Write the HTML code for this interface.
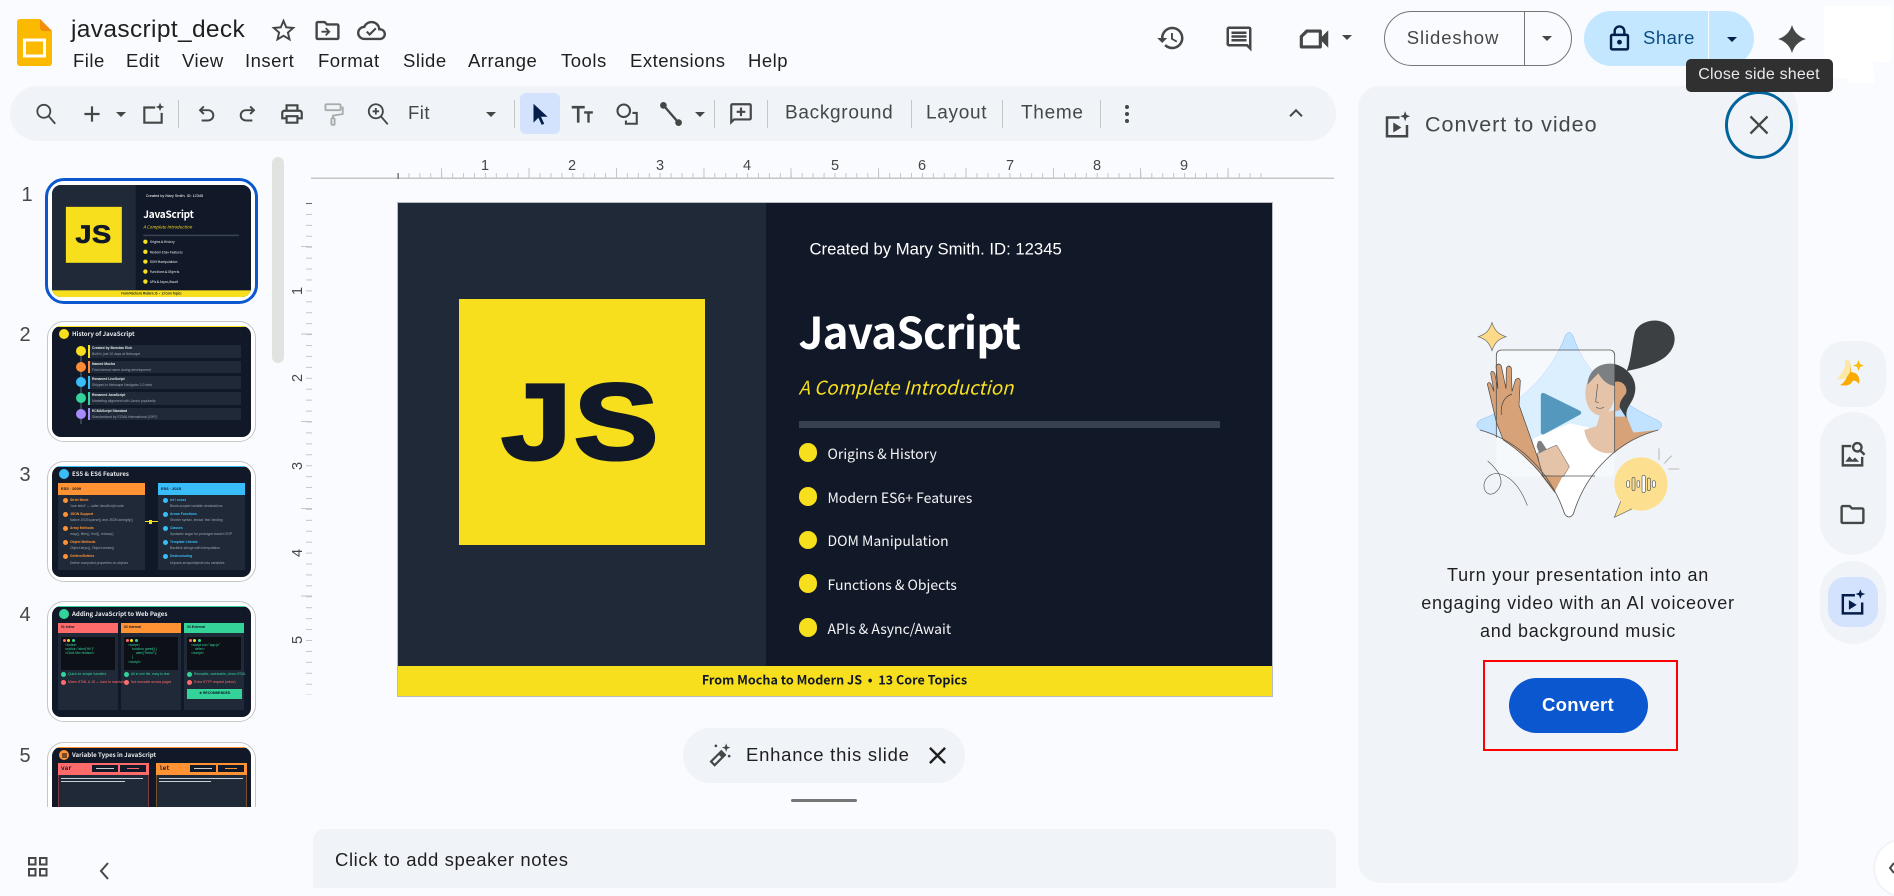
<!DOCTYPE html>
<html><head><meta charset="utf-8"><title>javascript_deck</title>
<style>
html,body{margin:0;padding:0;width:1894px;height:888px;overflow:hidden;background:#f9fbfe;font-family:"Liberation Sans",sans-serif;color:#1f1f1f}
*{box-sizing:border-box}
.a{position:absolute}
.t{position:absolute;white-space:nowrap;line-height:1;transform:translateY(-50%)}
.c{position:absolute;white-space:nowrap;line-height:1;transform:translate(-50%,-50%)}
.i{position:absolute;width:29px;height:29px;fill:#444746}
.s{width:26px;height:26px;top:101px}
.m{font-size:18.5px;letter-spacing:.5px;top:61px;color:#1f1f1f}
.caret{position:absolute;width:0;height:0;border-left:5px solid transparent;border-right:5px solid transparent;border-top:5px solid #444746}
.sep{position:absolute;top:100px;width:1px;height:28px;background:#c7c7c7}
.tb{font-size:19px;letter-spacing:.7px;top:113px;color:#444746}
.num{font-size:20px;color:#444746}
.rn{font-size:14.5px;color:#444746}
.ns{font-family:"Noto Sans CJK JP","Liberation Sans",sans-serif}
.js{font-family:"Liberation Sans",Arial,sans-serif;font-size:108px;font-weight:700;color:#111827;-webkit-text-stroke:3px #111827;letter-spacing:2px;transform:translate(-50%,-50%) scaleX(1.17)}
.h1{font-size:44px;font-weight:700;color:#fff;letter-spacing:-.85px}
.slide{position:absolute;width:874.5px;height:493px;background:#111827;overflow:hidden}
.thumbframe{position:absolute;left:47px;width:209px;height:121px;border:1.5px solid #c4c7c5;border-radius:17px;background:#fff}
.th{position:absolute;left:52px;width:199px;height:111px;background:#111827;border-radius:9px;overflow:hidden}
.th div,.th span{position:absolute}
.tt{position:absolute;color:#e8eaed;font-weight:700;font-size:6.1px;line-height:1;white-space:nowrap;left:20px;top:5px;font-family:"Noto Sans CJK JP",sans-serif}
.x{font-size:3.4px;line-height:1;white-space:nowrap;font-family:"Liberation Sans",sans-serif}
</style></head><body>

<!-- logo -->
<svg class="a" style="left:17px;top:19px" width="35" height="47" viewBox="0 0 35 47">
<path d="M3 0H23L35 12V44a3 3 0 0 1-3 3H3a3 3 0 0 1-3-3V3a3 3 0 0 1 3-3z" fill="#fbb900"/>
<path d="M23 0L35 12H26a3 3 0 0 1-3-3z" fill="#f28e0b"/>
<rect x="7.5" y="21" width="20" height="16" fill="none" stroke="#fff" stroke-width="3"/></svg>

<div class="t" style="left:71px;top:30px;font-size:24.5px;letter-spacing:.35px;color:#1f1f1f">javascript_deck</div>
<svg class="i" style="left:269px;top:16px" viewBox="0 0 24 24"><path d="M22 9.24l-7.19-.62L12 2 9.19 8.63 2 9.24l5.46 4.73L5.82 21 12 17.27 18.18 21l-1.63-7.03L22 9.24zM12 15.4l-3.76 2.27 1-4.28-3.32-2.88 4.38-.38L12 6.1l1.71 4.04 4.38.38-3.32 2.88 1 4.28L12 15.4z"/></svg>
<svg class="i" style="left:313px;top:16px" viewBox="0 0 24 24"><path d="M20 6h-8l-2-2H4c-1.1 0-2 .9-2 2v12c0 1.1.9 2 2 2h16c1.1 0 2-.9 2-2V8c0-1.1-.9-2-2-2zm0 12H4V6h5.17l2 2H20v10z"/><path d="M11 9.5l3.5 3.5-3.5 3.5-1-1 1.7-1.7H7v-1.6h4.7L10 10.5z"/></svg>
<svg class="i" style="left:357px;top:16px" viewBox="0 0 24 24"><path d="M19.35 10.04A7.49 7.49 0 0 0 12 4C9.11 4 6.6 5.64 5.35 8.04A5.994 5.994 0 0 0 0 14c0 3.31 2.69 6 6 6h13c2.76 0 5-2.24 5-5 0-2.64-2.05-4.78-4.65-4.96zM19 18H6c-2.21 0-4-1.79-4-4s1.79-4 4-4h.71C7.37 7.69 9.48 6 12 6c3.04 0 5.5 2.46 5.5 5.5v.5H19c1.66 0 3 1.34 3 3s-1.34 3-3 3z"/><path d="M10.5 16.5l-3-3 1.2-1.2 1.8 1.8 4.5-4.5 1.2 1.2z"/></svg>

<div class="t m" style="left:73px">File</div>
<div class="t m" style="left:126px">Edit</div>
<div class="t m" style="left:182px">View</div>
<div class="t m" style="left:245px">Insert</div>
<div class="t m" style="left:318px">Format</div>
<div class="t m" style="left:403px">Slide</div>
<div class="t m" style="left:468px">Arrange</div>
<div class="t m" style="left:561px">Tools</div>
<div class="t m" style="left:630px">Extensions</div>
<div class="t m" style="left:748px">Help</div>

<!-- top right -->
<svg class="i" style="left:1156px;top:23px;width:30px;height:30px" viewBox="0 0 24 24"><path d="M13 3c-4.97 0-9 4.03-9 9H1l3.89 3.89.07.14L9 12H6c0-3.87 3.13-7 7-7s7 3.13 7 7-3.13 7-7 7c-1.93 0-3.68-.79-4.94-2.06l-1.42 1.42C8.27 19.99 10.51 21 13 21c4.97 0 9-4.03 9-9s-4.03-9-9-9zm-1 5v5l4.28 2.54.72-1.21-3.5-2.08V8H12z"/></svg>
<svg class="i" style="left:1224px;top:24px;width:30px;height:30px" viewBox="0 0 24 24"><path d="M21.99 4c0-1.1-.89-2-1.99-2H4c-1.1 0-2 .9-2 2v12c0 1.1.9 2 2 2h14l4 4-.01-18zM20 4v13.17L18.83 16H4V4h16zM6 12h12v2H6zm0-3h12v2H6zm0-3h12v2H6z"/></svg>
<svg class="i" style="left:1295px;top:20px;width:38px;height:38px" viewBox="0 0 24 24"><path d="M17 10.5V7c0-.55-.45-1-1-1H7L3 10v7c0 .55.45 1 1 1h12c.55 0 1-.45 1-1v-3.5l4 4v-11l-4 4zM15 16H5v-5.2L8 8h7v8z"/></svg>
<div class="caret" style="left:1342px;top:35px"></div>

<div class="a" style="left:1384px;top:11px;width:188px;height:55px;border:1px solid #747775;border-radius:28px"></div>
<div class="a" style="left:1524px;top:11px;width:1px;height:55px;background:#747775"></div>
<div class="c" style="left:1453px;top:38px;font-size:18.5px;letter-spacing:.9px;color:#444746">Slideshow</div>
<div class="caret" style="left:1542px;top:36px"></div>

<div class="a" style="left:1584px;top:11px;width:170px;height:55px;background:#c2e7ff;border-radius:28px"></div>
<div class="a" style="left:1708px;top:11px;width:1px;height:55px;background:#f9fbfe"></div>
<svg class="i" style="left:1605px;top:24px;fill:#041e49" viewBox="0 0 24 24"><path d="M18 8h-1V6c0-2.76-2.24-5-5-5S7 3.24 7 6v2H6c-1.1 0-2 .9-2 2v10c0 1.1.9 2 2 2h12c1.1 0 2-.9 2-2V10c0-1.1-.9-2-2-2zM9 6c0-1.66 1.34-3 3-3s3 1.34 3 3v2H9V6zm9 14H6V10h12v10zm-6-3c1.1 0 2-.9 2-2s-.9-2-2-2-2 .9-2 2 .9 2 2 2z"/></svg>
<div class="t" style="left:1643px;top:38px;font-size:18.5px;letter-spacing:.5px;color:#0b4d80">Share</div>
<div class="caret" style="left:1727px;top:37px;border-top-color:#041e49"></div>

<svg class="a" style="left:1778px;top:25px" width="28" height="28" viewBox="0 0 28 28"><path d="M14 0C16 7 21 12 28 14C21 16 16 21 14 28C12 21 7 16 0 14C7 12 12 7 14 0Z" fill="#444746"/></svg>

<div class="a" style="left:1824px;top:6px;width:67px;height:56px;background:#fff"></div>
<div class="a" style="left:1824px;top:60px;width:49px;height:18px;background:#fff"></div>
<div class="a" style="left:1848px;top:70px;width:26px;height:13px;background:#fff"></div>

<!-- toolbar -->
<div class="a" style="left:10px;top:86px;width:1326px;height:55px;background:#f0f4f9;border-radius:28px"></div>
<div class="a" style="left:520px;top:93px;width:40px;height:41px;background:#d3e3fd;border-radius:6px"></div>
<div class="sep" style="left:178px"></div><div class="sep" style="left:514px"></div><div class="sep" style="left:714px"></div><div class="sep" style="left:767px"></div><div class="sep" style="left:911px"></div><div class="sep" style="left:1002px"></div><div class="sep" style="left:1100px"></div>

<svg class="i s" style="left:33px;fill:none;stroke:#444746;stroke-width:1.7" viewBox="0 0 24 24"><circle cx="10" cy="9.5" r="6"/><path d="M14.5 14l6 7"/></svg>
<svg class="i s" style="left:79px" viewBox="0 0 24 24"><path d="M19 13h-6v6h-2v-6H5v-2h6V5h2v6h6v2z"/></svg>
<div class="caret" style="left:116px;top:112px"></div>
<svg class="i s" style="left:140px" viewBox="0 0 24 24"><path d="M3 5h11v2H5v12h14v-8h2v10H3z"/><path d="M18.5 1.5l1.1 2.900 2.900 1.100-2.900 1.100-1.100 2.900-1.100-2.900-2.900-1.100 2.900-1.100z"/></svg>
<svg class="i s" style="left:193px;fill:none;stroke:#444746;stroke-width:1.8" viewBox="0 0 24 24"><path d="M10 5L6.500 8.500 10 12M6.500 8.500H14a4.700 4.700 0 0 1 0 9.500H8"/></svg>
<svg class="i s" style="left:235px;fill:none;stroke:#444746;stroke-width:1.8" viewBox="0 0 24 24"><path d="M14 5l3.500 3.500L14 12M17.500 8.500H10a4.700 4.700 0 0 0 0 9.500h6"/></svg>
<svg class="i s" style="left:279px" viewBox="0 0 24 24"><path d="M19 8h-1V3H6v5H5c-1.66 0-3 1.34-3 3v6h4v4h12v-4h4v-6c0-1.66-1.34-3-3-3zM8 5h8v3H8V5zm8 12v2H8v-4h8v2zm2-2v-2H6v2H4v-4c0-.55.45-1 1-1h14c.55 0 1 .45 1 1v4h-2z"/></svg>
<svg class="i s" style="left:320px;fill:none;stroke:#a8abaa;stroke-width:1.7" viewBox="0 0 24 24"><rect x="5" y="3" width="14" height="5.500" rx="1"/><path d="M19 6h2v6l-9 1.500V16"/><rect x="10.500" y="16" width="3" height="6" rx="1"/></svg>
<svg class="i s" style="left:365px;fill:none;stroke:#444746;stroke-width:1.7" viewBox="0 0 24 24"><circle cx="10" cy="9.500" r="6.500"/><path d="M15 14.500l6 7M10 6.500v6M7 9.500h6"/></svg>
<div class="t" style="left:408px;top:113px;font-size:18.5px;letter-spacing:.5px;color:#444746">Fit</div>
<div class="caret" style="left:486px;top:112px"></div>
<svg class="i s" style="left:527px;fill:#041e49" viewBox="0 0 24 24"><path d="M6 2.500V20l4.500-4.500L13.600 22l2.300-1-3-6.500H19z"/></svg>
<svg class="i s" style="left:569px" viewBox="0 0 24 24"><path d="M2.500 4.500h12v2.400h-4.800V20H7.300V6.900H2.500zM14 9.500h8v2.100h-2.900V20h-2.200v-8.400H14z"/></svg>
<svg class="i s" style="left:614px;fill:none;stroke:#444746;stroke-width:1.9" viewBox="0 0 24 24"><circle cx="9" cy="9" r="5.800"/><path d="M17 11h4v10H11v-3"/></svg>
<svg class="i s" style="left:658px;fill:none;stroke:#444746;stroke-width:2.2" viewBox="0 0 24 24"><path d="M5.500 4.500L18.500 19.500"/><circle cx="5" cy="4" r="2" fill="#444746"/><circle cx="19" cy="20" r="2" fill="#444746"/></svg>
<div class="caret" style="left:695px;top:112px"></div>
<svg class="i s" style="left:728px" viewBox="0 0 24 24"><path d="M4 2h16c1.100 0 2 .9 2 2v12c0 1.100-.9 2-2 2H6l-4 4V4c0-1.100.9-2 2-2zm0 2v13.170L5.170 16H20V4H4z"/><path d="M11 6h2v3h3v2h-3v3h-2v-3H8V9h3z"/></svg>
<div class="t tb" style="left:785px">Background</div>
<div class="t tb" style="left:926px">Layout</div>
<div class="t tb" style="left:1021px">Theme</div>
<div class="a" style="left:1125px;top:105px;width:4px;height:4px;border-radius:50%;background:#444746"></div>
<div class="a" style="left:1125px;top:112px;width:4px;height:4px;border-radius:50%;background:#444746"></div>
<div class="a" style="left:1125px;top:119px;width:4px;height:4px;border-radius:50%;background:#444746"></div>
<svg class="i s" style="left:1283px;top:100px;fill:none;stroke:#444746;stroke-width:1.8" viewBox="0 0 24 24"><path d="M6.500 15L12 9.500 17.500 15"/></svg>

<!-- rulers -->
<svg class="a" style="left:296px;top:155px" width="1050" height="550">
<defs>
<pattern id="ht" patternUnits="userSpaceOnUse" x="101.5" y="0" width="10.925" height="30"><rect x="0" y="18" width="1" height="6" fill="#c4c7c5"/></pattern>
<pattern id="vt" patternUnits="userSpaceOnUse" x="0" y="48" width="30" height="10.925"><rect x="10" y="0" width="6" height="1" fill="#c4c7c5"/></pattern>
</defs>
<rect x="101.5" y="0" width="874" height="24" fill="url(#ht)"/>
<rect x="15" y="22.5" width="1023" height="1.5" fill="#c4c7c5"/>
<rect x="101.5" y="18" width="1.3" height="6" fill="#666"/>
<rect x="145" y="13" width="1" height="11" fill="#c4c7c5"/><rect x="232.5" y="13" width="1" height="11" fill="#c4c7c5"/><rect x="320" y="13" width="1" height="11" fill="#c4c7c5"/><rect x="407.5" y="13" width="1" height="11" fill="#c4c7c5"/><rect x="494.5" y="13" width="1" height="11" fill="#c4c7c5"/><rect x="582" y="13" width="1" height="11" fill="#c4c7c5"/><rect x="669.5" y="13" width="1" height="11" fill="#c4c7c5"/><rect x="757" y="13" width="1" height="11" fill="#c4c7c5"/><rect x="844" y="13" width="1" height="11" fill="#c4c7c5"/><rect x="931.5" y="13" width="1" height="11" fill="#c4c7c5"/>
<rect x="0" y="48" width="30" height="492" fill="url(#vt)"/>
<rect x="10" y="48" width="6" height="1" fill="#666"/>
<rect x="5" y="91" width="11" height="1" fill="#c4c7c5"/><rect x="5" y="178.5" width="11" height="1" fill="#c4c7c5"/><rect x="5" y="266" width="11" height="1" fill="#c4c7c5"/><rect x="5" y="353" width="11" height="1" fill="#c4c7c5"/><rect x="5" y="440.5" width="11" height="1" fill="#c4c7c5"/>
</svg>
<div class="c rn" style="left:485px;top:166px">1</div><div class="c rn" style="left:572px;top:166px">2</div><div class="c rn" style="left:660px;top:166px">3</div><div class="c rn" style="left:747px;top:166px">4</div><div class="c rn" style="left:835px;top:166px">5</div><div class="c rn" style="left:922px;top:166px">6</div><div class="c rn" style="left:1010px;top:166px">7</div><div class="c rn" style="left:1097px;top:166px">8</div><div class="c rn" style="left:1184px;top:166px">9</div>
<div class="c rn" style="left:298px;top:291px;transform:translate(-50%,-50%) rotate(-90deg)">1</div><div class="c rn" style="left:298px;top:378px;transform:translate(-50%,-50%) rotate(-90deg)">2</div><div class="c rn" style="left:298px;top:466px;transform:translate(-50%,-50%) rotate(-90deg)">3</div><div class="c rn" style="left:298px;top:553px;transform:translate(-50%,-50%) rotate(-90deg)">4</div><div class="c rn" style="left:298px;top:640px;transform:translate(-50%,-50%) rotate(-90deg)">5</div>

<!-- scrollbar -->
<div class="a" style="left:272px;top:157px;width:12px;height:206px;border-radius:6px;background:#e1e3e1"></div>

<!-- main slide -->
<div class="slide" style="left:397.5px;top:203px;outline:1px solid #b8bcc0;outline-offset:0">
 <div class="a" style="left:0;top:0;width:368px;height:493px;background:#1f2937"></div>
 <div class="a" style="left:61px;top:96px;width:246px;height:246px;background:#f7df1e"></div>
 <div class="c js" style="left:183px;top:219px">JS</div>
 <div class="t" style="left:412px;top:47px;font-size:16.7px;color:#fff">Created by Mary Smith. ID: 12345</div>
 <div class="t ns h1" style="left:401px;top:127px">JavaScript</div>
 <div class="t ns" style="left:401px;top:185px;font-size:18.8px;font-style:italic;color:#f7df1e">A Complete Introduction</div>
 <div class="a" style="left:401px;top:218px;width:421px;height:7px;background:#374151"></div>
 <div class="a" style="left:401px;top:240px;width:18.5px;height:18.5px;border-radius:50%;background:#f7df1e"></div>
 <div class="a" style="left:401px;top:284px;width:18.5px;height:18.5px;border-radius:50%;background:#f7df1e"></div>
 <div class="a" style="left:401px;top:327.5px;width:18.5px;height:18.5px;border-radius:50%;background:#f7df1e"></div>
 <div class="a" style="left:401px;top:371px;width:18.5px;height:18.5px;border-radius:50%;background:#f7df1e"></div>
 <div class="a" style="left:401px;top:415px;width:18.5px;height:18.5px;border-radius:50%;background:#f7df1e"></div>
 <div class="t ns" style="left:430px;top:251px;font-size:14px;color:#f3f4f6">Origins &amp; History</div>
 <div class="t ns" style="left:430px;top:295px;font-size:14px;color:#f3f4f6">Modern ES6+ Features</div>
 <div class="t ns" style="left:430px;top:338px;font-size:14px;color:#f3f4f6">DOM Manipulation</div>
 <div class="t ns" style="left:430px;top:382px;font-size:14px;color:#f3f4f6">Functions &amp; Objects</div>
 <div class="t ns" style="left:430px;top:426px;font-size:14px;color:#f3f4f6">APIs &amp; Async/Await</div>
 <div class="a" style="left:0;top:463px;width:875px;height:30px;background:#f7df1e"></div>
 <div class="c ns" style="left:437px;top:477px;font-size:12.6px;font-weight:700;color:#111827">From Mocha to Modern JS &nbsp;•&nbsp; 13 Core Topics</div>
</div>

<!-- enhance pill -->
<div class="a" style="left:683px;top:728px;width:282px;height:55px;border-radius:28px;background:#f0f4f9"></div>
<svg class="i" style="left:705px;top:741px" viewBox="0 0 24 24"><path d="M13.500 8.500l3 3L8 20l-3-3z" fill="none" stroke="#444746" stroke-width="1.800"/><path d="M11 11l3 3 2.500-2.500-3-3z"/><path d="M17.500 2l.9 2.600L21 5.500l-2.600.9-.9 2.600-.9-2.600L14 5.500l2.600-.9z"/><circle cx="9" cy="4" r="1.100"/><circle cx="20" cy="12.500" r="1.100"/></svg>
<div class="t" style="left:746px;top:755px;font-size:18.5px;letter-spacing:.75px;color:#1f1f1f">Enhance this slide</div>
<svg class="i" style="left:923px;top:741px;fill:#1f1f1f" viewBox="0 0 24 24"><path d="M19 6.410L17.590 5 12 10.590 6.410 5 5 6.410 10.590 12 5 17.590 6.410 19 12 13.410 17.590 19 19 17.590 13.410 12z"/></svg>
<div class="a" style="left:791px;top:798.5px;width:66px;height:3px;border-radius:2px;background:#747775"></div>

<!-- notes -->
<div class="a" style="left:313px;top:829px;width:1023px;height:59px;background:#f0f4f9;border-radius:12px 12px 0 0"></div>
<div class="t" style="left:335px;top:860px;font-size:18.5px;letter-spacing:.6px;color:#1f1f1f">Click to add speaker notes</div>

<!-- bottom-left -->
<svg class="a" style="left:28px;top:857px" width="20" height="20" viewBox="0 0 20 20"><g fill="none" stroke="#444746" stroke-width="2"><rect x="1" y="1" width="6.500" height="6.500"/><rect x="12" y="1" width="6.500" height="6.500"/><rect x="1" y="12" width="6.500" height="6.500"/><rect x="12" y="12" width="6.500" height="6.500"/></g></svg>
<svg class="a" style="left:98px;top:861px" width="12" height="20" viewBox="0 0 12 20"><path d="M10 2L3 10l7 8" fill="none" stroke="#444746" stroke-width="2"/></svg>

<!-- thumbnails area -->
<div class="c num" style="left:27px;top:195px">1</div>
<div class="c num" style="left:25px;top:335px">2</div>
<div class="c num" style="left:25px;top:475px">3</div>
<div class="c num" style="left:25px;top:615px">4</div>
<div class="c num" style="left:25px;top:756px">5</div>

<div class="a" style="left:0;top:170px;width:270px;height:637px;overflow:hidden">
 <!-- slide 1 -->
 <div class="a" style="left:45px;top:8px;width:213px;height:126px;border:3.5px solid #0b57d0;border-radius:19px;background:#fff"></div>
 <div class="a" style="left:52px;top:15px;width:199px;height:112px;border-radius:9px;overflow:hidden;background:#111827">
  <div class="slide" style="left:0;top:0;transform:scale(.2275);transform-origin:0 0">
   <div class="a" style="left:0;top:0;width:368px;height:493px;background:#1f2937"></div>
   <div class="a" style="left:61px;top:96px;width:246px;height:246px;background:#f7df1e"></div>
   <div class="c js" style="left:183px;top:219px">JS</div>
   <div class="t" style="left:412px;top:47px;font-size:16.7px;color:#fff">Created by Mary Smith. ID: 12345</div>
   <div class="t ns h1" style="left:401px;top:127px">JavaScript</div>
   <div class="t ns" style="left:401px;top:185px;font-size:18.8px;font-style:italic;color:#f7df1e">A Complete Introduction</div>
   <div class="a" style="left:401px;top:218px;width:421px;height:7px;background:#374151"></div>
   <div class="a" style="left:401px;top:240px;width:18.5px;height:18.5px;border-radius:50%;background:#f7df1e"></div>
   <div class="a" style="left:401px;top:284px;width:18.5px;height:18.5px;border-radius:50%;background:#f7df1e"></div>
   <div class="a" style="left:401px;top:327.5px;width:18.5px;height:18.5px;border-radius:50%;background:#f7df1e"></div>
   <div class="a" style="left:401px;top:371px;width:18.5px;height:18.5px;border-radius:50%;background:#f7df1e"></div>
   <div class="a" style="left:401px;top:415px;width:18.5px;height:18.5px;border-radius:50%;background:#f7df1e"></div>
   <div class="t ns" style="left:430px;top:251px;font-size:14px;color:#f3f4f6">Origins &amp; History</div>
   <div class="t ns" style="left:430px;top:295px;font-size:14px;color:#f3f4f6">Modern ES6+ Features</div>
   <div class="t ns" style="left:430px;top:338px;font-size:14px;color:#f3f4f6">DOM Manipulation</div>
   <div class="t ns" style="left:430px;top:382px;font-size:14px;color:#f3f4f6">Functions &amp; Objects</div>
   <div class="t ns" style="left:430px;top:426px;font-size:14px;color:#f3f4f6">APIs &amp; Async/Await</div>
   <div class="a" style="left:0;top:463px;width:875px;height:30px;background:#f7df1e"></div>
   <div class="c ns" style="left:437px;top:477px;font-size:12.6px;font-weight:700;color:#111827">From Mocha to Modern JS &nbsp;•&nbsp; 13 Core Topics</div>
  </div>
 </div>

 <!-- slide 2 -->
 <div class="thumbframe" style="top:151px"></div>
 <div class="th" style="top:156px">
  <div style="left:0;top:0;width:199px;height:1px;background:#f7df1e"></div>
  <div style="left:7px;top:3px;width:10px;height:10px;border-radius:50%;background:#f7df1e"></div>
  <span class="tt">History of JavaScript</span>
  <div style="left:27.5px;top:20px;width:2px;height:78px;background:#374151"></div>
  <div style="left:36px;top:19px;width:153px;height:13px;background:#1f2937;border-left:2px solid #f7df1e"></div>
  <div style="left:36px;top:35px;width:153px;height:12px;background:#1f2937;border-left:2px solid #ff8c35"></div>
  <div style="left:36px;top:50px;width:153px;height:13px;background:#1f2937;border-left:2px solid #38bdf8"></div>
  <div style="left:36px;top:66px;width:153px;height:13px;background:#1f2937;border-left:2px solid #34d399"></div>
  <div style="left:36px;top:82px;width:153px;height:12px;background:#1f2937;border-left:2px solid #a78bfa"></div>
  <div style="left:23.5px;top:20px;width:10px;height:10px;border-radius:50%;background:#f7df1e"></div>
  <div style="left:23.5px;top:36px;width:10px;height:10px;border-radius:50%;background:#ff8c35"></div>
  <div style="left:23.5px;top:51px;width:10px;height:10px;border-radius:50%;background:#38bdf8"></div>
  <div style="left:23.5px;top:67px;width:10px;height:10px;border-radius:50%;background:#34d399"></div>
  <div style="left:23.5px;top:83px;width:10px;height:10px;border-radius:50%;background:#a78bfa"></div>
  <span class="x" style="left:40px;top:21px;color:#e5e7eb;font-weight:700">Created by Brendan Eich</span><span class="x" style="left:40px;top:27px;color:#9ca3af">Built in just 10 days at Netscape</span>
  <span class="x" style="left:40px;top:37px;color:#e5e7eb;font-weight:700">Named Mocha</span><span class="x" style="left:40px;top:43px;color:#9ca3af">First internal name during development</span>
  <span class="x" style="left:40px;top:52px;color:#e5e7eb;font-weight:700">Renamed LiveScript</span><span class="x" style="left:40px;top:58px;color:#9ca3af">Shipped in Netscape Navigator 2.0 beta</span>
  <span class="x" style="left:40px;top:68px;color:#e5e7eb;font-weight:700">Renamed JavaScript</span><span class="x" style="left:40px;top:74px;color:#9ca3af">Marketing alignment with Java's popularity</span>
  <span class="x" style="left:40px;top:84px;color:#e5e7eb;font-weight:700">ECMAScript Standard</span><span class="x" style="left:40px;top:90px;color:#9ca3af">Standardized by ECMA International (1997)</span>
 </div>

 <!-- slide 3 -->
 <div class="thumbframe" style="top:291px"></div>
 <div class="th" style="top:296px">
  <div style="left:0;top:0;width:199px;height:1px;background:#38bdf8"></div>
  <div style="left:7px;top:3px;width:10px;height:10px;border-radius:50%;background:#38bdf8"></div>
  <span class="tt">ES5 &amp; ES6 Features</span>
  <div style="left:6px;top:17px;width:87px;height:87px;background:#1f2937"></div>
  <div style="left:106px;top:17px;width:87px;height:87px;background:#1f2937"></div>
  <div style="left:6px;top:17px;width:87px;height:12px;background:#ff9233"></div>
  <div style="left:106px;top:17px;width:87px;height:12px;background:#38bdf8"></div>
  <span class="x" style="left:9px;top:21px;color:#111827;font-weight:700;font-size:4px">ES5 · 2009</span>
  <span class="x" style="left:109px;top:21px;color:#111827;font-weight:700;font-size:4px">ES6 · 2015</span>
  <div style="left:93px;top:55px;width:13px;height:1px;background:#f7df1e"></div><div style="left:97px;top:53.5px;width:3px;height:4px;background:#f7df1e"></div>
  <div style="left:11px;top:32px;width:5px;height:5px;border-radius:50%;background:#ff9233"></div><div style="left:11px;top:46px;width:5px;height:5px;border-radius:50%;background:#ff9233"></div><div style="left:11px;top:60px;width:5px;height:5px;border-radius:50%;background:#ff9233"></div><div style="left:11px;top:74px;width:5px;height:5px;border-radius:50%;background:#ff9233"></div><div style="left:11px;top:88px;width:5px;height:5px;border-radius:50%;background:#ff9233"></div>
  <div style="left:111px;top:32px;width:5px;height:5px;border-radius:50%;background:#38bdf8"></div><div style="left:111px;top:46px;width:5px;height:5px;border-radius:50%;background:#38bdf8"></div><div style="left:111px;top:60px;width:5px;height:5px;border-radius:50%;background:#38bdf8"></div><div style="left:111px;top:74px;width:5px;height:5px;border-radius:50%;background:#38bdf8"></div><div style="left:111px;top:88px;width:5px;height:5px;border-radius:50%;background:#38bdf8"></div>
  <span class="x" style="left:18px;top:33px;color:#ff9233;font-weight:700">Strict Mode</span><span class="x" style="left:18px;top:39px;color:#9ca3af">"use strict" — safer JavaScript code</span>
  <span class="x" style="left:18px;top:47px;color:#ff9233;font-weight:700">JSON Support</span><span class="x" style="left:18px;top:53px;color:#9ca3af">Native JSON.parse() and JSON.stringify()</span>
  <span class="x" style="left:18px;top:61px;color:#ff9233;font-weight:700">Array Methods</span><span class="x" style="left:18px;top:67px;color:#9ca3af">map(), filter(), find(), reduce()</span>
  <span class="x" style="left:18px;top:75px;color:#ff9233;font-weight:700">Object Methods</span><span class="x" style="left:18px;top:81px;color:#9ca3af">Object.keys(), Object.create()</span>
  <span class="x" style="left:18px;top:89px;color:#ff9233;font-weight:700">Getters/Setters</span><span class="x" style="left:18px;top:96px;color:#9ca3af">Define computed properties on objects</span>
  <span class="x" style="left:118px;top:33px;color:#38bdf8;font-weight:700">let / const</span><span class="x" style="left:118px;top:39px;color:#9ca3af">Block-scoped variable declarations</span>
  <span class="x" style="left:118px;top:47px;color:#38bdf8;font-weight:700">Arrow Functions</span><span class="x" style="left:118px;top:53px;color:#9ca3af">Shorter syntax, lexical 'this' binding</span>
  <span class="x" style="left:118px;top:61px;color:#38bdf8;font-weight:700">Classes</span><span class="x" style="left:118px;top:67px;color:#9ca3af">Syntactic sugar for prototype-based OOP</span>
  <span class="x" style="left:118px;top:75px;color:#38bdf8;font-weight:700">Template Literals</span><span class="x" style="left:118px;top:81px;color:#9ca3af">Backtick strings with interpolation</span>
  <span class="x" style="left:118px;top:89px;color:#38bdf8;font-weight:700">Destructuring</span><span class="x" style="left:118px;top:96px;color:#9ca3af">Unpack arrays/objects into variables</span>
 </div>

 <!-- slide 4 -->
 <div class="thumbframe" style="top:431px"></div>
 <div class="th" style="top:436px">
  <div style="left:0;top:0;width:199px;height:1px;background:#34d399"></div>
  <div style="left:7px;top:3px;width:10px;height:10px;border-radius:50%;background:#34d399"></div>
  <span class="tt">Adding JavaScript to Web Pages</span>
  <div style="left:6px;top:17px;width:60px;height:87px;background:#1f2937"></div><div style="left:69px;top:17px;width:60px;height:87px;background:#1f2937"></div><div style="left:132px;top:17px;width:60px;height:87px;background:#1f2937"></div>
  <div style="left:6px;top:17px;width:60px;height:10px;background:#ff6b6b"></div><div style="left:69px;top:17px;width:60px;height:10px;background:#ff9233"></div><div style="left:132px;top:17px;width:60px;height:10px;background:#34d399"></div>
  <span class="x" style="left:9px;top:20px;color:#111827;font-weight:700">01 Inline</span><span class="x" style="left:72px;top:20px;color:#111827;font-weight:700">02 Internal</span><span class="x" style="left:135px;top:20px;color:#111827;font-weight:700">03 External</span>
  <div style="left:9px;top:31px;width:54px;height:33px;background:#0d1117"></div><div style="left:72px;top:31px;width:54px;height:33px;background:#0d1117"></div><div style="left:135px;top:31px;width:54px;height:33px;background:#0d1117"></div>
  <div style="left:11px;top:33px;width:3px;height:3px;border-radius:50%;background:#ff6b6b"></div><div style="left:15px;top:33px;width:3px;height:3px;border-radius:50%;background:#f7df1e"></div><div style="left:20px;top:33px;width:3px;height:3px;border-radius:50%;background:#34d399"></div>
  <div style="left:74px;top:33px;width:3px;height:3px;border-radius:50%;background:#ff6b6b"></div><div style="left:78px;top:33px;width:3px;height:3px;border-radius:50%;background:#f7df1e"></div><div style="left:83px;top:33px;width:3px;height:3px;border-radius:50%;background:#34d399"></div>
  <div style="left:137px;top:33px;width:3px;height:3px;border-radius:50%;background:#ff6b6b"></div><div style="left:141px;top:33px;width:3px;height:3px;border-radius:50%;background:#f7df1e"></div><div style="left:146px;top:33px;width:3px;height:3px;border-radius:50%;background:#34d399"></div>
  <span class="x" style="left:13px;top:38px;color:#34d399">&lt;button</span><span class="x" style="left:13px;top:42px;color:#34d399">onclick="alert('Hi!')"</span><span class="x" style="left:13px;top:46px;color:#34d399">&gt;Click Me&lt;/button&gt;</span>
  <span class="x" style="left:76px;top:38px;color:#34d399">&lt;script&gt;</span><span class="x" style="left:80px;top:42px;color:#34d399">function greet() {</span><span class="x" style="left:84px;top:46px;color:#34d399">alert("Hello!");</span><span class="x" style="left:80px;top:50px;color:#34d399">}</span><span class="x" style="left:76px;top:55px;color:#34d399">&lt;/script&gt;</span>
  <span class="x" style="left:139px;top:38px;color:#34d399">&lt;script src="app.js"</span><span class="x" style="left:143px;top:42px;color:#34d399">defer&gt;</span><span class="x" style="left:139px;top:46px;color:#34d399">&lt;/script&gt;</span>
  <div style="left:9px;top:66px;width:5px;height:5px;border-radius:50%;background:#34d399"></div><div style="left:9px;top:74px;width:5px;height:5px;border-radius:50%;background:#ff6b6b"></div>
  <div style="left:72px;top:66px;width:5px;height:5px;border-radius:50%;background:#34d399"></div><div style="left:72px;top:74px;width:5px;height:5px;border-radius:50%;background:#ff6b6b"></div>
  <div style="left:135px;top:66px;width:5px;height:5px;border-radius:50%;background:#34d399"></div><div style="left:135px;top:74px;width:5px;height:5px;border-radius:50%;background:#ff6b6b"></div>
  <span class="x" style="left:16px;top:67px;color:#34d399">Quick for simple handlers</span><span class="x" style="left:16px;top:75px;color:#ff6b6b">Mixes HTML &amp; JS — hard to maintain</span>
  <span class="x" style="left:79px;top:67px;color:#34d399">All in one file, easy to test</span><span class="x" style="left:79px;top:75px;color:#ff6b6b">Not reusable across pages</span>
  <span class="x" style="left:142px;top:67px;color:#34d399">Reusable, cacheable, clean HTML</span><span class="x" style="left:142px;top:75px;color:#ff6b6b">Extra HTTP request (minor)</span>
  <div style="left:135px;top:83px;width:55px;height:10px;background:#34d399"></div>
  <span class="x" style="left:147px;top:86px;color:#111827;font-weight:700">★ RECOMMENDED</span>
 </div>

 <!-- slide 5 -->
 <div class="thumbframe" style="top:572px"></div>
 <div class="th" style="top:577px;height:70px;border-radius:9px 9px 0 0">
  <div style="left:0;top:0;width:199px;height:1px;background:#ff9233"></div>
  <div style="left:7px;top:3px;width:10px;height:10px;border-radius:50%;background:#ff9233"></div>
  <div style="left:9.5px;top:5.5px;width:5px;height:5px;background:#7a4a25"></div>
  <span class="tt">Variable Types in JavaScript</span>
  <div style="left:6px;top:16px;width:91px;height:60px;background:#1f2937;border:1px solid #7f3a44"></div>
  <div style="left:104px;top:16px;width:91px;height:60px;background:#1f2937;border:1px solid #7a4f2c"></div>
  <div style="left:6px;top:16px;width:91px;height:12px;background:#ff6b6b"></div>
  <div style="left:104px;top:16px;width:91px;height:12px;background:#ff9233"></div>
  <span style="left:9px;top:19px;font:700 6px 'Liberation Mono',monospace;color:#111827;line-height:1">var</span>
  <span style="left:107px;top:19px;font:700 6px 'Liberation Mono',monospace;color:#111827;line-height:1">let</span>
  <div style="left:40px;top:18px;width:26px;height:7px;background:#111827"></div><div style="left:68px;top:18px;width:26px;height:7px;background:#111827"></div>
  <div style="left:138px;top:18px;width:26px;height:7px;background:#111827"></div><div style="left:166px;top:18px;width:26px;height:7px;background:#111827"></div>
  <div style="left:44px;top:21px;width:18px;height:1px;background:#ccc"></div><div style="left:75px;top:21px;width:12px;height:1px;background:#ff6b6b"></div>
  <div style="left:142px;top:21px;width:18px;height:1px;background:#ccc"></div><div style="left:173px;top:21px;width:12px;height:1px;background:#ff9233"></div>
  <div style="left:9px;top:31px;width:82px;height:1.2px;background:#c9ced6"></div><div style="left:9px;top:34px;width:64px;height:1.2px;background:#c9ced6"></div>
  <div style="left:107px;top:31px;width:84px;height:1.2px;background:#c9ced6"></div><div style="left:107px;top:34px;width:52px;height:1.2px;background:#c9ced6"></div>
 </div>
</div>

<!-- side panel -->
<div class="a" style="left:1358px;top:86px;width:440px;height:797px;background:#f0f4f9;border-radius:22px"></div>
<svg class="i" style="left:1382px;top:110px;width:30px;height:30px" viewBox="0 0 24 24"><path d="M3 5h11v2H5v13h14v-8h2v10H3z"/><path d="M18.5 1l1.1 2.900 2.900 1.100-2.900 1.100-1.100 2.900-1.100-2.900-2.900-1.100 2.900-1.100z"/><path d="M9 10l6.500 4L9 18z"/></svg>
<div class="t" style="left:1425px;top:125px;font-size:21.5px;letter-spacing:1px;color:#444746">Convert to video</div>
<div class="a" style="left:1725px;top:91px;width:68px;height:68px;border-radius:50%;border:3.5px solid #00639b"></div>
<svg class="a" style="left:1748px;top:114px" width="22" height="22" viewBox="0 0 22 22"><path d="M2.500 2.500L19.500 19.500M19.500 2.500L2.500 19.500" stroke="#444746" stroke-width="2.300"/></svg>
<div class="a" style="left:1686px;top:59px;width:147px;height:33px;background:#303030;border-radius:5px"></div>
<div class="c" style="left:1759px;top:75px;font-size:16px;letter-spacing:.2px;color:#e8eaed">Close side sheet</div>

<!-- illustration -->
<svg class="a" style="left:1400px;top:290px" width="300" height="240" viewBox="0 0 900 720">
<defs><clipPath id="star"><path d="M497 135Q507 120 518 135C560 260 660 340 775 392Q795 405 775 420C660 450 560 540 520 672Q507 690 494 672C450 540 350 450 240 420Q220 405 240 390C350 350 450 260 497 135Z"/></clipPath></defs>
<path d="M497 135Q507 120 518 135C560 260 660 340 775 392Q795 405 775 420C660 450 560 540 520 672Q507 690 494 672C450 540 350 450 240 420Q220 405 240 390C350 350 450 260 497 135Z" fill="#c2e3ff" stroke="#8ab4f8" stroke-width="1.5"/>
<g clip-path="url(#star)">
 <path d="M400 445L510 400L600 420L700 440L560 700H400Z" fill="#fff"/>
 <path d="M644 380V490L655 490L790 418L700 428L680 380Z" fill="#d7a278"/>
</g>
<rect x="289" y="180" width="355" height="380" rx="15" fill="#fff" opacity=".42"/>
<path d="M680 243C695 205 695 165 705 125C720 90 780 78 810 110C835 140 825 180 790 205C760 225 720 235 680 243Z" fill="#3c4043"/>
<path d="M644 222C690 235 715 275 703 315C695 345 675 350 680 385L644 330Z" fill="#3c4043"/>
<path d="M644 276C665 268 685 290 678 310C668 325 655 335 660 360L644 365Z" fill="#d7a278"/>
<path d="M644 360V488C600 497 560 470 553 420L590 408L600 370L644 360Z" fill="#e5c3a8"/>
<ellipse cx="600" cy="310" rx="44" ry="66" fill="#e5c3a8"/>
<path d="M644 222C600 215 565 240 562 285C575 270 585 260 595 250C610 275 625 285 644 288Z" fill="#7d8082"/>
<path d="M593 282L587 335L596 338M588 352Q600 358 612 352" fill="none" stroke="#555" stroke-width="2"/>
<path d="M429 315L537 368L429 427Z" fill="#5598bd" stroke="#5598bd" stroke-width="13" stroke-linejoin="round"/>
<path d="M412 490L470 465L508 530L490 560L425 556Z" fill="#e5c3a8" stroke="#555" stroke-width="1.5"/>
<path d="M425 558H488L463 607Z" fill="#d7a278"/>
<path d="M410 470Q412 445 425 455L440 478L418 490Z" fill="#7d8082"/>
<path d="M262 282Q268 272 274 285L282 304L272 250Q276 238 284 250L294 296L288 228Q296 216 304 228L318 296L319 234Q327 222 334 234L336 304L346 270Q356 258 361 272L357 345L412 500L430 560L465 607Q400 510 310 450L290 400Z" fill="#d7a278" stroke="#444" stroke-width="2" stroke-linejoin="round"/>
<path d="M336 312Q300 325 304 375" fill="none" stroke="#444" stroke-width="2"/>
<path d="M289 195a15 15 0 0 1 15-15H629a15 15 0 0 1 15 15V488M289 195V443M425 558H585" fill="none" stroke="#555" stroke-width="2.5"/>
<path d="M240 420C350 450 450 540 494 672Q507 690 520 672C560 540 660 450 775 420" fill="none" stroke="#555" stroke-width="2.5"/>
<path d="M276 98C284 122 295 133 318 140C295 147 284 158 276 182C268 158 257 147 235 140C257 133 268 122 276 98Z" fill="#fdd98a" stroke="#666" stroke-width="2"/>
<path d="M663 632L643 682L695 657Z" fill="#fde08f" stroke="#666" stroke-width="2"/>
<circle cx="723" cy="582" r="80" fill="#fde08f"/>
<g fill="#fff" stroke="#555" stroke-width="2"><rect x="680" y="572" width="9" height="20" rx="4.5"/><rect x="696" y="562" width="9" height="40" rx="4.5" fill="none"/><rect x="711" y="572" width="8" height="20" rx="4"/><rect x="726" y="556" width="10" height="52" rx="5"/><rect x="742" y="564" width="9" height="38" rx="4.5" fill="none"/><rect x="757" y="572" width="9" height="20" rx="4.5"/></g>
<path d="M777 475V510M793 520L815 497M805 537H838" stroke="#aaa" stroke-width="2.5" fill="none"/>
<path d="M263 513C300 545 320 580 285 608C260 625 240 590 260 565C290 530 350 560 382 647" fill="none" stroke="#555" stroke-width="2"/>
</svg>

<!-- panel text -->
<div class="c" style="left:1578px;top:575px;font-size:18px;letter-spacing:.75px;color:#1f1f1f">Turn your presentation into an</div>
<div class="c" style="left:1578px;top:603px;font-size:18px;letter-spacing:.75px;color:#1f1f1f">engaging video with an AI voiceover</div>
<div class="c" style="left:1578px;top:631px;font-size:18px;letter-spacing:.75px;color:#1f1f1f">and background music</div>
<div class="a" style="left:1483px;top:660px;width:195px;height:91px;border:2px solid #f00"></div>
<div class="a" style="left:1509px;top:678px;width:139px;height:55px;border-radius:28px;background:#0b57d0"></div>
<div class="c" style="left:1578px;top:705px;font-size:18.5px;font-weight:700;letter-spacing:.3px;color:#fff">Convert</div>

<!-- right rail -->
<div class="a" style="left:1820px;top:341px;width:66px;height:66px;border-radius:24px;background:#f0f4f9"></div>
<div class="a" style="left:1820px;top:412px;width:66px;height:143px;border-radius:33px;background:#f0f4f9"></div>
<div class="a" style="left:1820px;top:561px;width:66px;height:83px;border-radius:33px;background:#f0f4f9"></div>
<div class="a" style="left:1828px;top:577px;width:50px;height:50px;border-radius:17px;background:#d3e3fd"></div>
<svg class="a" style="left:1836px;top:358px" width="32" height="30" viewBox="0 0 32 30">
<path d="M10 2C14 1 15 8 15 14L19 15C23 17 24 22 23 26C20 22 17 22 16 24C14 28 8 28 4 27C8 25 12 20 11 14C10.5 9 9 5 10 2Z" fill="#f9ab00"/>
<path d="M10 2C14 1 15 8 14 14C12 18 10 20 8 21C4 22 2 20 1 22C3 16 10 14 10 2Z" fill="#fde8a8"/>
<path d="M22.5 2l1.500 4 4 1.500-4 1.500-1.500 4-1.500-4-4-1.500 4-1.500z" fill="#fbbc04"/></svg>
<svg class="i" style="left:1838px;top:440px" viewBox="0 0 24 24"><path d="M3 4h8v2H5v14h14v-6h2v8H3z"/><path d="M6 18l3.500-4.500 2.500 3 2-2 3.500 3.500z"/><path d="M16 1.500a4.500 4.500 0 0 1 3.700 7l3 3-1.400 1.400-3-3A4.500 4.500 0 1 1 16 1.500zm0 2a2.500 2.500 0 1 0 0 5 2.500 2.500 0 0 0 0-5z"/></svg>
<svg class="i" style="left:1838px;top:500px" viewBox="0 0 24 24"><path d="M20 6h-8l-2-2H4c-1.100 0-2 .9-2 2v12c0 1.100.9 2 2 2h16c1.100 0 2-.9 2-2V8c0-1.100-.9-2-2-2zm0 12H4V6h5.170l2 2H20v10z"/></svg>
<svg class="i" style="left:1838px;top:588px;fill:#041e49" viewBox="0 0 24 24"><path d="M3 5h11v2H5v13h14v-8h2v10H3z"/><path d="M18.5 1l1.100 2.900 2.900 1.100-2.900 1.100-1.100 2.900-1.100-2.900-2.900-1.100 2.900-1.100z"/><path d="M9 10l6.500 4L9 18z"/></svg>
<div class="a" style="left:1875px;top:840px;width:56px;height:56px;border-radius:50%;background:#fff;box-shadow:0 0 3px rgba(0,0,0,.12)"></div>
<svg class="a" style="left:1889px;top:862px" width="6" height="12" viewBox="0 0 6 12"><path d="M5 1L1 6l4 5" fill="none" stroke="#444746" stroke-width="2"/></svg>
</body></html>
